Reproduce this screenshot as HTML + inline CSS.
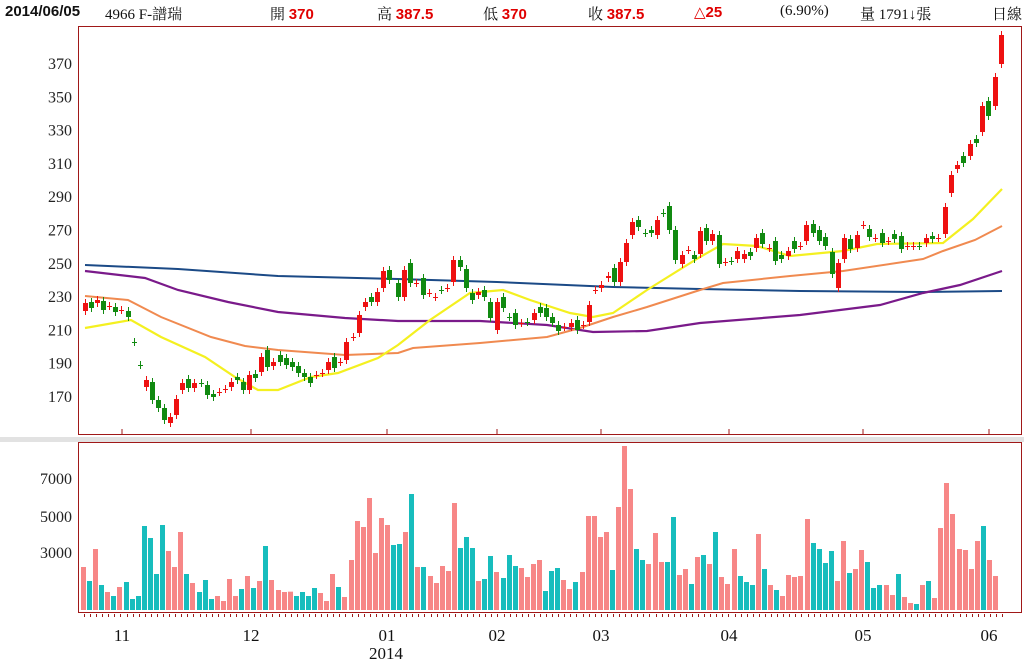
<!DOCTYPE html>
<html><head><meta charset="utf-8">
<style>
html,body{margin:0;padding:0;background:#fff;}
body{width:1024px;height:662px;overflow:hidden;position:relative;font-family:"Liberation Serif","Noto Serif CJK SC","Noto Sans CJK TC",serif;}
.h{position:absolute;top:3px;font-size:15px;color:#111;white-space:nowrap;}
.r{color:#e00000;font-weight:bold;font-family:"Liberation Sans",sans-serif;}
svg{position:absolute;left:0;top:0;}
</style></head><body>
<div class="h" style="left:5px;font-weight:bold;font-family:'Liberation Sans',sans-serif;">2014/06/05</div>
<div class="h" style="left:105px;">4966 F-譜瑞</div>
<div class="h" style="left:270px;">開 <span class="r">370</span></div>
<div class="h" style="left:377px;">高 <span class="r">387.5</span></div>
<div class="h" style="left:483px;">低 <span class="r">370</span></div>
<div class="h" style="left:588px;">收 <span class="r">387.5</span></div>
<div class="h" style="left:694px;"><span class="r" style="font-weight:normal">△</span><span class="r">25</span></div>
<div class="h" style="left:780px;">(6.90%)</div>
<div class="h" style="left:860px;">量 1791↓張</div>
<div class="h" style="left:992px;">日線</div>
<svg id="s" width="1024" height="662" xmlns="http://www.w3.org/2000/svg"></svg>
<script>
var S=document.getElementById('s'),h='';
h+='<rect x="0" y="437" width="1024" height="5" fill="#e2e2e2"/>';
h+='<rect x="78.5" y="26.5" width="943" height="408" fill="none" stroke="#a01818"/>';
h+='<rect x="78.5" y="442.5" width="943" height="170" fill="none" stroke="#a01818"/>';
var yl=[370,350,330,310,290,270,250,230,210,190,170];
yl.forEach(function(v,i){h+='<text x="72" y="'+(69+i*33.3)+'" font-size="16" text-anchor="end" fill="#222" font-family="Liberation Serif,serif">'+v+'</text>';});
[[7000,484],[5000,522],[3000,558]].forEach(function(a){h+='<text x="72" y="'+a[1]+'" font-size="16" text-anchor="end" fill="#222" font-family="Liberation Serif,serif">'+a[0]+'</text>';});
var months=[[122,'11'],[251,'12'],[387,'01'],[497,'02'],[601,'03'],[729,'04'],[863,'05'],[989,'06']];
months.forEach(function(m){h+='<line x1="'+m[0]+'" y1="429" x2="'+m[0]+'" y2="435" stroke="#a01818"/>';
h+='<text x="'+m[0]+'" y="641" font-size="17" text-anchor="middle" fill="#111" font-family="Liberation Serif,serif">'+m[1]+'</text>';});
h+='<text x="386" y="659" font-size="17" text-anchor="middle" fill="#111" font-family="Liberation Serif,serif">2014</text>';
for(var i=0;i<152;i++){var x=Math.round(84+i*6.08)+0.5;h+='<line x1="'+x+'" y1="614" x2="'+x+'" y2="617" stroke="#a01818"/>';}
// MAs
function pl(pts,c,w){h+='<polyline fill="none" stroke="'+c+'" stroke-width="'+w+'" points="'+pts+'"/>';}
pl('85,265 178,269 278,276 398,279 497,282 613,287 700,289 800,291 923,292 1002,291','#1b4a86',2);
pl('85,271 145,278 178,290 228,302 278,312 345,318 398,321 480,321 547,325 593,332 647,331 700,323 800,315 880,305 923,293 960,285 1002,271','#7a1a8a',2.2);
pl('85,296 128,300 161,317 211,337 245,346 278,350 345,355 398,353 413,348 480,343 547,337 580,328 613,317 647,307 700,290 723,283 790,276 843,271 923,259 943,251 975,240 1002,226','#f08a50',2);
pl('85,328 131,320 161,337 205,357 235,377 258,390 278,390 311,377 338,373 378,358 398,345 430,320 470,293 503,290 530,300 570,313 593,317 613,313 647,290 700,257 723,244 757,246 790,256 843,251 877,244 943,243 973,219 1002,189','#f4f020',2.2);
// candles
var A=[['r',303,311],['g',302,308],['r',300,303],['g',301,310],['r',306,306],['g',307,312],['r',310,310],['g',311,317],['g',342,342],['g',365,365],['r',380,387],['g',382,400],['g',400,408],['g',408,420],['r',417,423],['r',399,415],['r',383,390],['g',379,388],['r',383,388],['g',383,383],['g',385,395],['g',394,397],['r',392,392],['r',389,389],['r',382,387],['g',377,380],['g',382,390],['r',375,390],['g',374,378],['r',357,372],['g',350,367],['r',362,366],['g',355,362],['g',358,365],['g',362,367],['g',366,373],['g',373,377],['g',377,383],['r',375,375],['r',373,373],['r',362,370],['g',357,368],['r',362,362],['r',342,360],['r',337,337],['r',315,333],['r',302,307],['g',297,302],['r',292,302],['r',271,288],['g',270,280]];
var B=[['g',283,297],['r',270,297],['g',263,283],['r',283,283],['g',278,295],['r',293,293],['r',297,297],['g',290,290],['r',288,288],['r',260,282],['g',260,267],['g',269,288],['g',293,300],['r',292,295],['g',290,297],['g',302,318],['r',302,330],['g',297,308],['g',317,317],['g',313,325],['r',323,323],['g',322,322],['r',313,320],['g',307,313],['g',308,317],['g',317,323],['g',325,331],['r',327,327],['r',323,327],['g',320,330],['r',325,325],['r',305,322],['r',290,290],['r',285,288],['r',276,278],['g',268,282],['r',262,282],['r',243,262],['r',222,235],['g',220,227],['g',233,233],['g',230,233],['r',220,235],['g',213,213],['g',206,230],['g',230,260],['r',255,264],['r',250,250],['g',255,259],['r',231,254]];
var C=[['g',228,241],['r',234,241],['g',235,264],['r',262,262],['g',261,261],['r',251,259],['r',254,259],['g',252,256],['r',238,248],['g',233,244],['r',248,248],['g',241,261],['g',255,259],['r',251,256],['g',241,249],['r',246,246],['r',225,241],['g',224,233],['g',230,241],['g',237,246],['g',252,274],['r',263,288],['r',238,259],['g',239,249],['r',235,248],['r',225,225],['g',229,237],['r',238,238],['g',233,243],['r',241,241],['g',234,239],['g',236,249],['r',246,246],['r',246,246],['g',246,246],['r',238,243],['g',236,239],['r',238,238],['r',207,234],['r',175,193],['r',165,169],['g',156,163],['r',144,156],['g',139,143],['r',106,132],['g',101,116],['r',77,106],['r',35,64]];
function draw(arr,x0,x1){var n=arr.length;arr.forEach(function(c,i){var x=Math.round(x0+(x1-x0)*i/(n-1));var col=c[0]=='r'?'#ee1111':'#118a11';
var t=c[1],b=c[2];h+='<line x1="'+(x+0.5)+'" y1="'+(t-4)+'" x2="'+(x+0.5)+'" y2="'+(b+4)+'" stroke="'+col+'"/>';
if(b-t<2){h+='<line x1="'+(x-2)+'" y1="'+(t+0.5)+'" x2="'+(x+3)+'" y2="'+(t+0.5)+'" stroke="'+col+'"/>';}
else h+='<rect x="'+(x-2)+'" y="'+t+'" width="5" height="'+(b-t)+'" fill="'+col+'"/>';});}
draw(A,85,389);draw(B,398,700);draw(C,706,1001);
// volume
var V=[['p',567],['t',581],['p',549],['t',585],['p',592],['t',596],['p',587],['t',582],['t',599],['t',596],['t',526],['t',538],['t',574],['t',525],['p',551],['p',567],['p',532],['t',574],['p',583],['t',592],['t',580],['t',599],['p',596],['p',601],['p',579],['p',596],['t',589],['p',576],['t',588],['p',581],['t',546],['p',580],['p',590],['p',592]];
var z7=[['p',455],['t',468],['t',456],['t',468],['t',444],['p',459],['p',483],['p',402],['t',441],['p',471],['p',360],['p',243],['p',261],['p',174],['p',339],['p',234],['p',255],['t',315],['t',312],['p',276],['t',162],['p',381],['t',381],['p',408],['p',429],['p',378],['p',393],['p',189],['t',324],['t',291],['t',324],['p',423],['t',417],['t',348],['p',396],['t',414],['t',345],['t',378],['p',384],['p',411],['p',372],['p',360],['t',453],['t',393],['t',384],['p',420],['p',447],['t',426],['p',396],['p',228],['p',228],['p',291],['p',276],['t',390],['p',201],['p',18],['p',147],['t',327],['t',360],['p',372],['p',279]];
var z8=[['p',366],['t',366],['t',231],['p',405],['p',387],['t',432],['p',351],['t',345],['p',372],['t',276],['p',411],['p',432],['p',327],['t',408],['t',426],['t',435],['p',282],['t',387],['p',435],['t',450],['p',468],['p',405],['p',411],['p',408],['p',237],['t',309],['t',327],['t',369],['t',333],['p',423],['p',303],['t',399],['p',387],['p',330],['t',366],['t',444],['t',435],['p',435],['p',465],['t',402],['p',471],['p',489],['t',492],['p',435],['t',423],['p',474],['p',264],['p',129],['p',222],['p',327],['p',330],['p',387],['p',303],['t',258],['p',360],['p',408]];
z7.concat(z8).forEach(function(v){V.push([v[0],440+v[1]/3]);});
V.forEach(function(v,i){var x=Math.round(81+i*6.08);h+='<rect x="'+x+'" y="'+v[1]+'" width="5" height="'+(610-v[1])+'" fill="'+(v[0]=='p'?'#f78787':'#17bdbd')+'"/>';});
S.innerHTML=h;
</script>
</body></html>
